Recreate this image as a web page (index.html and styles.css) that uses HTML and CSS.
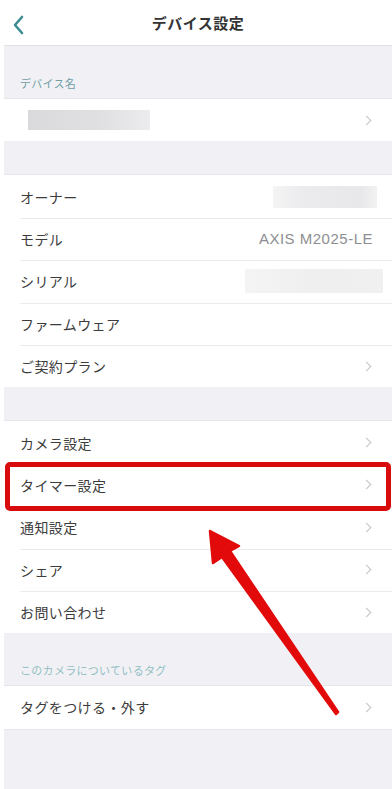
FILE: index.html
```html
<!DOCTYPE html>
<html lang="ja">
<head>
<meta charset="utf-8">
<title>デバイス設定</title>
<link rel="stylesheet" href="styles.css">
</head>
<body>
<div class="screen">
  <header class="navbar">
    <span class="back">
      <svg width="14" height="20" viewBox="0 0 14 20"><polyline points="10,2 3,10 10,18" fill="none" stroke="#3d8c94" stroke-width="2.6" stroke-linecap="round" stroke-linejoin="round"/></svg>
    </span>
    <h1 class="title">デバイス設定</h1>
  </header>

  <div class="gap gap-label"><span class="section-label">デバイス名</span></div>
  <ul class="list">
    <li class="row"><span class="blur blur-name"></span><span class="chev"></span></li>
  </ul>

  <div class="gap gap-small"></div>
  <ul class="list">
    <li class="row"><span class="label">オーナー</span><span class="blur blur-owner"></span></li>
    <li class="row"><span class="label">モデル</span><span class="value">AXIS M2025-LE</span></li>
    <li class="row"><span class="label">シリアル</span><span class="blur blur-serial"></span></li>
    <li class="row"><span class="label">ファームウェア</span></li>
    <li class="row"><span class="label">ご契約プラン</span><span class="chev"></span></li>
  </ul>

  <div class="gap gap-small"></div>
  <ul class="list">
    <li class="row"><span class="label">カメラ設定</span><span class="chev"></span></li>
    <li class="row highlight"><span class="label">タイマー設定</span><span class="chev"></span></li>
    <li class="row"><span class="label">通知設定</span><span class="chev"></span></li>
    <li class="row"><span class="label">シェア</span><span class="chev"></span></li>
    <li class="row"><span class="label">お問い合わせ</span><span class="chev"></span></li>
  </ul>

  <div class="gap gap-label"><span class="section-label light">このカメラについているタグ</span></div>
  <ul class="list">
    <li class="row"><span class="label">タグをつける・外す</span><span class="chev"></span></li>
  </ul>
  <div class="gap gap-fill"></div>

  <svg class="arrow" width="392" height="789" viewBox="0 0 392 789">
    <polygon points="210,531 239,546 230,551 338,712 336,714 222,557 213,563" fill="#e20a0a" stroke="#e20a0a" stroke-width="2.5" stroke-linejoin="round"/>
  </svg>
</div>
</body>
</html>
```

FILE: styles.css
```css
* { box-sizing: border-box; }
html, body { margin: 0; padding: 0; background: #ffffff; }
body {
  font-family: "Noto Sans CJK JP", "Noto Sans", sans-serif;
  color: #3a3a3a;
}
.screen {
  position: relative;
  width: 392px;
  height: 789px;
  overflow: hidden;
  padding-left: 4px;
  display: flex;
  flex-direction: column;
}
.navbar {
  height: 46px;
  flex: none;
  display: flex;
  align-items: center;
  justify-content: center;
  position: relative;
  border-bottom: 1px solid #e2e2e6;
  background: #fff;
}
.back {
  position: absolute;
  left: 8px;
  top: 15px;
  display: flex;
}
.title {
  margin: 0;
  font-size: 15px;
  font-weight: 700;
  color: #333;
  letter-spacing: 0.5px;
}
.gap {
  background: #f1f1f5;
  flex: none;
}
.gap-label {
  height: 53px;
  display: flex;
  align-items: flex-end;
  padding: 0 0 7px 16px;
  border-bottom: 1px solid #e6e6ea;
}
.gap-small {
  height: 34px;
  border-bottom: 1px solid #e6e6ea;
}
.gap-fill { flex: 1; border-top: 1px solid #e6e6ea; }
.section-label {
  font-size: 11px;
  color: #6f9ea4;
  letter-spacing: 0.3px;
}
.section-label.light { color: #93bfc3; }
.list {
  list-style: none;
  margin: 0;
  padding: 0;
  background: #fff;
  flex: none;
}
.row {
  height: 42.4px;
  display: flex;
  align-items: center;
  padding: 0 20px 0 16px;
  position: relative;
}
.row + .row::before {
  content: "";
  position: absolute;
  top: 0;
  left: 16px;
  right: 0;
  height: 1px;
  background: #ebebee;
}
.label {
  font-size: 14px;
  color: #3c3c3c;
  letter-spacing: 0.4px;
}
.value {
  margin-left: auto;
  font-size: 15px;
  letter-spacing: 0.5px;
  color: #8e8e92;
  font-family: "Liberation Sans", "Noto Sans", sans-serif;
  margin-right: -1px;
}
.chev {
  margin-left: auto;
  width: 7px;
  height: 7px;
  border-top: 1.5px solid #c2c2c6;
  border-right: 1.5px solid #c2c2c6;
  transform: rotate(45deg);
  margin-right: 2px;
}
.blur { display: block; background: #e2e2e4; border-radius: 1px; }
.blur-name {
  width: 122px;
  height: 20px;
  margin-left: 8px;
  background: linear-gradient(90deg, #dadadc 0%, #e0e0e2 60%, #ececee 100%);
}
.blur-owner {
  margin-left: auto;
  width: 104px;
  height: 22px;
  margin-right: -5px;
  background: linear-gradient(90deg, #f4f4f5 0%, #ebebed 30%, #e8e8ea 85%, #f2f2f3 100%);
}
.blur-serial {
  margin-left: auto;
  width: 138px;
  height: 24px;
  margin-right: -11px;
  background: linear-gradient(90deg, #f4f4f5 0%, #efeff0 50%, #f0f0f1 100%);
}
.highlight::after {
  content: "";
  position: absolute;
  top: -2px;
  bottom: -5px;
  left: 1px;
  right: 1px;
  border: 5px solid #d80c0c;
  border-radius: 5px;
  z-index: 2;
}
.arrow {
  position: absolute;
  left: 0;
  top: 0;
  pointer-events: none;
  z-index: 3;
}
```
